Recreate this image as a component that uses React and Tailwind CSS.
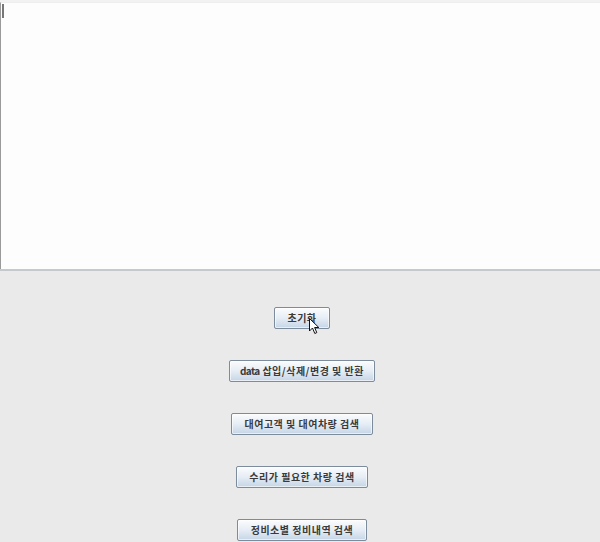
import React from "react";

const buttons = [
  { label: "초기화", pad: "px-[12px]" },
  { label: "data 삽입/삭제/변경 및 반환", pad: "px-[10px]" },
  { label: "대여고객 및 대여차량 검색", pad: "px-[12px]" },
  { label: "수리가 필요한 차량 검색", pad: "px-[12px]" },
  { label: "정비소별 정비내역 검색", pad: "px-[13px]" },
];

const SwingButton = ({ label, pad, children }) => (
  <button
    type="button"
    className={`relative h-[22px] ${pad} border border-[#7d8c9c] rounded-[2px] bg-gradient-to-b from-[#fbfcfd] via-[#e6edf5] to-[#c5d5e6] text-[10px] font-bold tracking-[0.5px] text-[#3a3a3a] leading-none whitespace-nowrap shadow-[inset_0_0_0_1px_rgba(255,255,255,0.6)]`}
    style={{ fontFamily: '"Noto Sans CJK KR", "DejaVu Sans", sans-serif' }}
  >
    {label.startsWith("data ") ? (
      <>
        <span className="tracking-[-0.6px]">data</span>
        {label.slice(4)}
      </>
    ) : (
      label
    )}
    {children}
  </button>
);

const Cursor = () => (
  <svg
    className="absolute left-[34px] top-[10px]"
    width="11"
    height="17"
    viewBox="0 0 11 17"
  >
    <path
      d="M0.5 0.5 L0.5 13 L3.5 10 L5.8 15.5 L7.8 14.6 L5.6 9.5 L9.8 9.5 Z"
      fill="#fff"
      stroke="#111"
      strokeWidth="1"
    />
  </svg>
);

export default function App() {
  return (
    <div className="w-[600px] h-[542px] overflow-hidden bg-[#ebeaeb] flex flex-col">
      <div className="h-[271px] pt-[2px] bg-[#f2f2f3] shrink-0">
        <div className="relative h-[267px] bg-[#fefdfe] border-l border-[#9a9a9a] border-t border-t-[#eeeeee]">
          <div className="absolute left-[1px] top-[1px] w-[2px] h-[14px] bg-[#777]" />
        </div>
        <div className="h-[2px] bg-[#c5c9cd]" />
      </div>
      <div className="flex flex-col items-center gap-[31px] pt-[36px] pl-[4px]">
        {buttons.map((b, i) => (
          <SwingButton key={b.label} label={b.label} pad={b.pad}>
            {i === 0 && <Cursor />}
          </SwingButton>
        ))}
      </div>
    </div>
  );
}
